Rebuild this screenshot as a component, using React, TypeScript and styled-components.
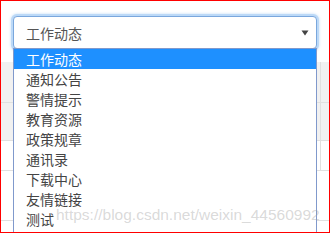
import React from "react";
import styled, { createGlobalStyle } from "styled-components";

const Global = createGlobalStyle`
  html, body { margin: 0; padding: 0; background: #fff; }
  body { font-family: "Noto Sans CJK SC", "Liberation Sans", sans-serif; }
`;

const Frame = styled.div`
  position: relative;
  box-sizing: border-box;
  width: 330px;
  height: 233px;
  border: 1px solid #ff0000;
  overflow: hidden;
  display: flex;
  flex-direction: column;
  background: #fff;
`;

const SelectRow = styled.div`
  padding: 15px 0 0 12px;
`;

const SelectBox = styled.div`
  box-sizing: border-box;
  width: 304px;
  height: 33px;
  border: 1px solid #7aa7dd;
  border-radius: 4px;
  box-shadow: 0 0 0 2px #bcd9f7, 0 0 3px 2px rgba(150, 195, 240, 0.6);
  display: flex;
  align-items: center;
  justify-content: space-between;
  padding: 0 7px 0 12px;
  font-size: 14px;
  color: #555;
  background: #fff;
`;

const SelectText = styled.span`
  line-height: 1;
`;

const Table = styled.div`
  margin-top: 13px;
  display: flex;
  flex-direction: column;
`;

const Row = styled.div<{ $h: number; $shade?: boolean; $split?: boolean }>`
  box-sizing: border-box;
  height: ${(p) => p.$h}px;
  background: ${(p) => (p.$shade ? "#f1f1f1" : "#fff")};
  border-bottom: 1px solid #e0e0e0;
  display: grid;
  grid-template-columns: 320px 1fr;
`;

const Cell = styled.div<{ $split?: boolean }>`
  border-right: ${(p) => (p.$split ? "1px solid #e0e0e0" : "none")};
`;

const List = styled.ul`
  position: absolute;
  top: 47px;
  left: 12px;
  box-sizing: border-box;
  width: 304px;
  height: 200px;
  margin: 0;
  padding: 0;
  list-style: none;
  border: 1px solid #8099cc;
  background: #fff;
`;

const Item = styled.li<{ $active?: boolean }>`
  height: 20px;
  padding-left: 12px;
  display: flex;
  align-items: center;
  font-size: 14px;
  color: ${(p) => (p.$active ? "#fff" : "#444")};
  background: ${(p) => (p.$active ? "#1e90ff" : "transparent")};
  line-height: 1;
`;

const Watermark = styled.div`
  position: absolute;
  top: 206px;
  left: 55px;
  font-family: "Liberation Sans", Arial, sans-serif;
  font-size: 15.5px;
  line-height: 1;
  color: rgba(160, 160, 160, 0.4);
  white-space: nowrap;
  pointer-events: none;
`;

const items = [
  "工作动态",
  "通知公告",
  "警情提示",
  "教育资源",
  "政策规章",
  "通讯录",
  "下载中心",
  "友情链接",
  "测试",
];

export default function App() {
  return (
    <>
      <Global />
      <Frame>
        <SelectRow>
          <SelectBox>
            <SelectText>工作动态</SelectText>
            <svg width="8" height="6" viewBox="0 0 8 6">
              <path d="M0.5 0.5 L7.5 0.5 L4 5.5 Z" fill="#444" />
            </svg>
          </SelectBox>
        </SelectRow>
        <Table>
          <Row $h={41} $shade>
            <Cell $split />
            <Cell />
          </Row>
          <Row $h={38} $shade>
            <Cell $split />
            <Cell />
          </Row>
          <Row $h={30}>
            <Cell $split />
            <Cell />
          </Row>
          <Row $h={50}>
            <Cell />
            <Cell />
          </Row>
          <Row $h={20}>
            <Cell />
            <Cell />
          </Row>
        </Table>
        <List>
          {items.map((t, i) => (
            <Item key={t} $active={i === 0}>
              {t}
            </Item>
          ))}
        </List>
        <Watermark>https://blog.csdn.net/weixin_44560992</Watermark>
      </Frame>
    </>
  );
}
